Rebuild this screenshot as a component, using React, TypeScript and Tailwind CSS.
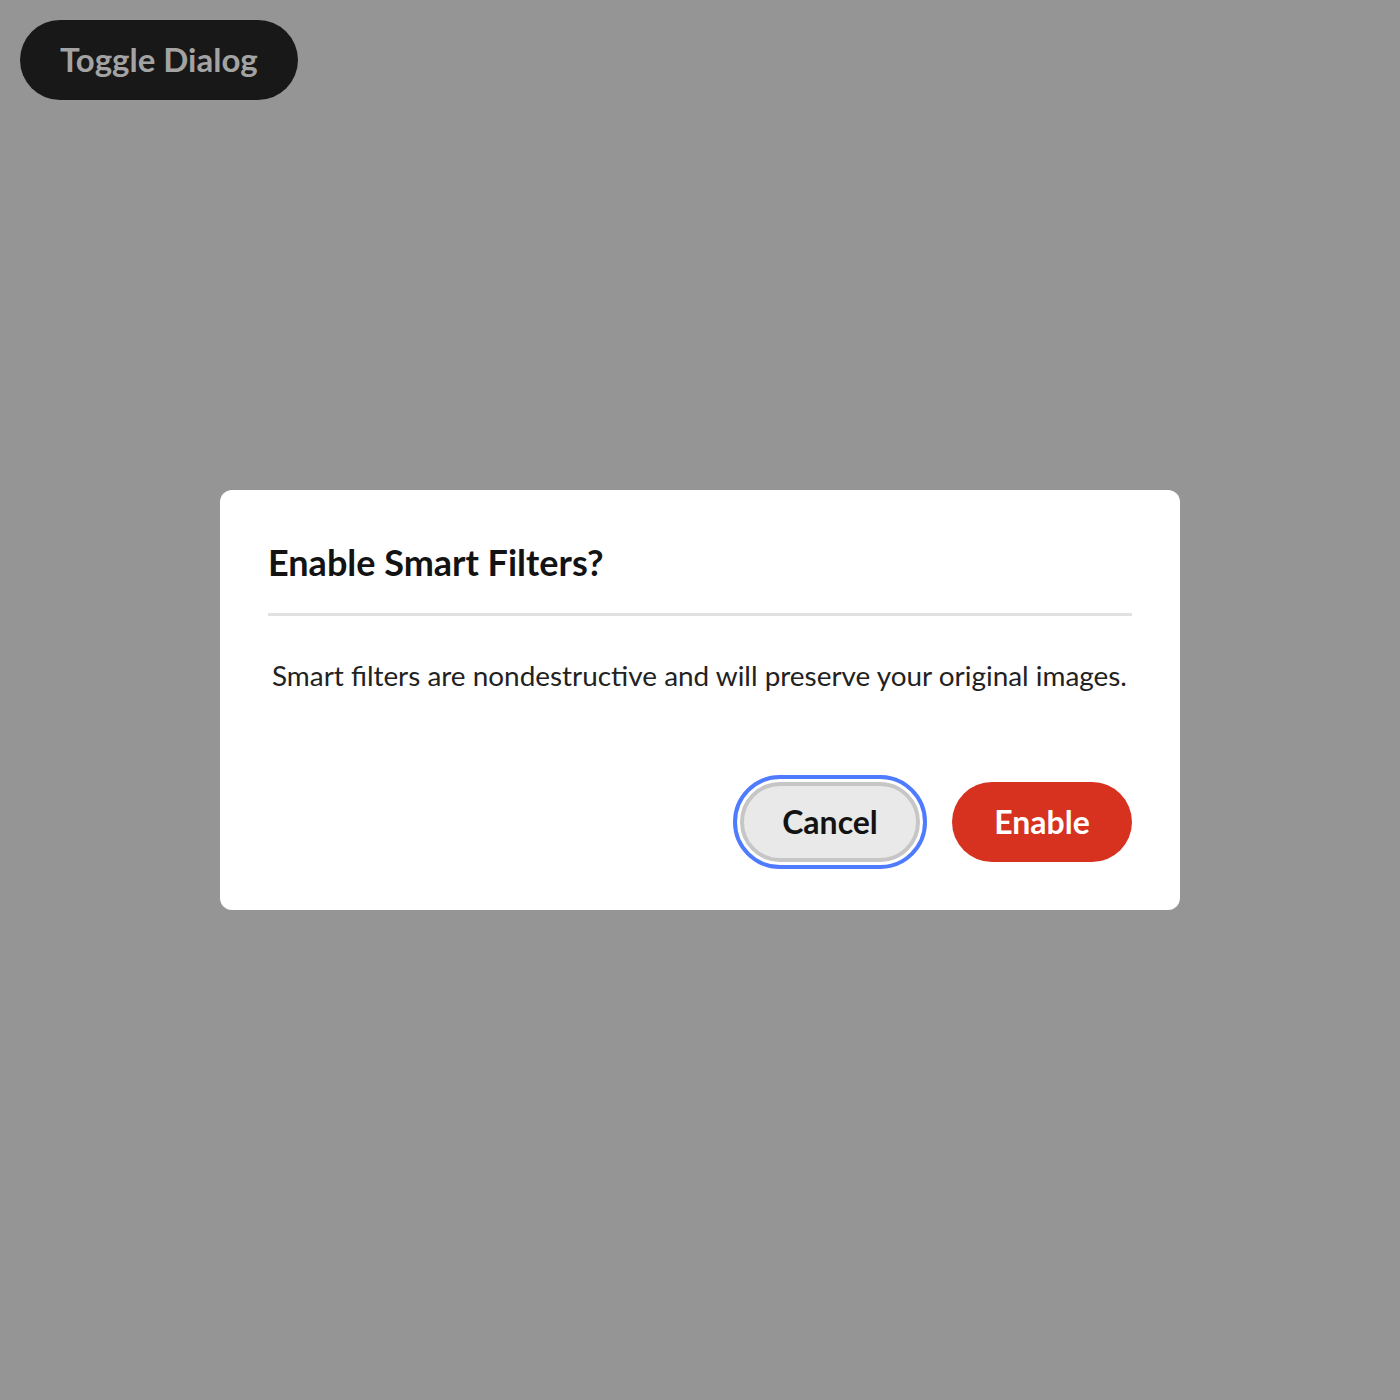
import React from "react"

export default function App() {
  return (
    <div className="relative min-h-screen w-full bg-[#959595] font-['Lato',sans-serif]">
      {/* Trigger */}
      <div className="p-5">
        <button className="h-20 rounded-full bg-[#181818] px-10 text-[33px] font-bold text-[#a3a3a3]">
          Toggle Dialog
        </button>
      </div>

      {/* Dialog overlay */}
      <div className="fixed inset-0 flex items-center justify-center">
        <div className="w-[960px] rounded-xl bg-white px-12 pt-12 pb-12">
          <h2 className="pt-[2px] text-[36px] leading-[44px] font-bold text-[#131313]">Enable Smart Filters?</h2>
          <div className="mt-[29px] h-[3px] w-full bg-[#e1e1e1]" />
          <p className="mt-[41px] pl-1 text-[27.9px] leading-[36px] whitespace-nowrap text-[#222222]">
            Smart filters are nondestructive and will preserve your original images.
          </p>
          <div className="mt-[89px] flex justify-end gap-8">
            <button className="h-20 w-[180px] rounded-full border-4 border-[#c6c6c6] bg-[#e9e9e9] text-[32px] font-bold text-[#131313] outline-4 outline-offset-[3px] outline-[#4f7bff]">
              Cancel
            </button>
            <button className="h-20 w-[180px] rounded-full bg-[#d73220] text-[32px] font-bold text-white">
              Enable
            </button>
          </div>
        </div>
      </div>
    </div>
  )
}
